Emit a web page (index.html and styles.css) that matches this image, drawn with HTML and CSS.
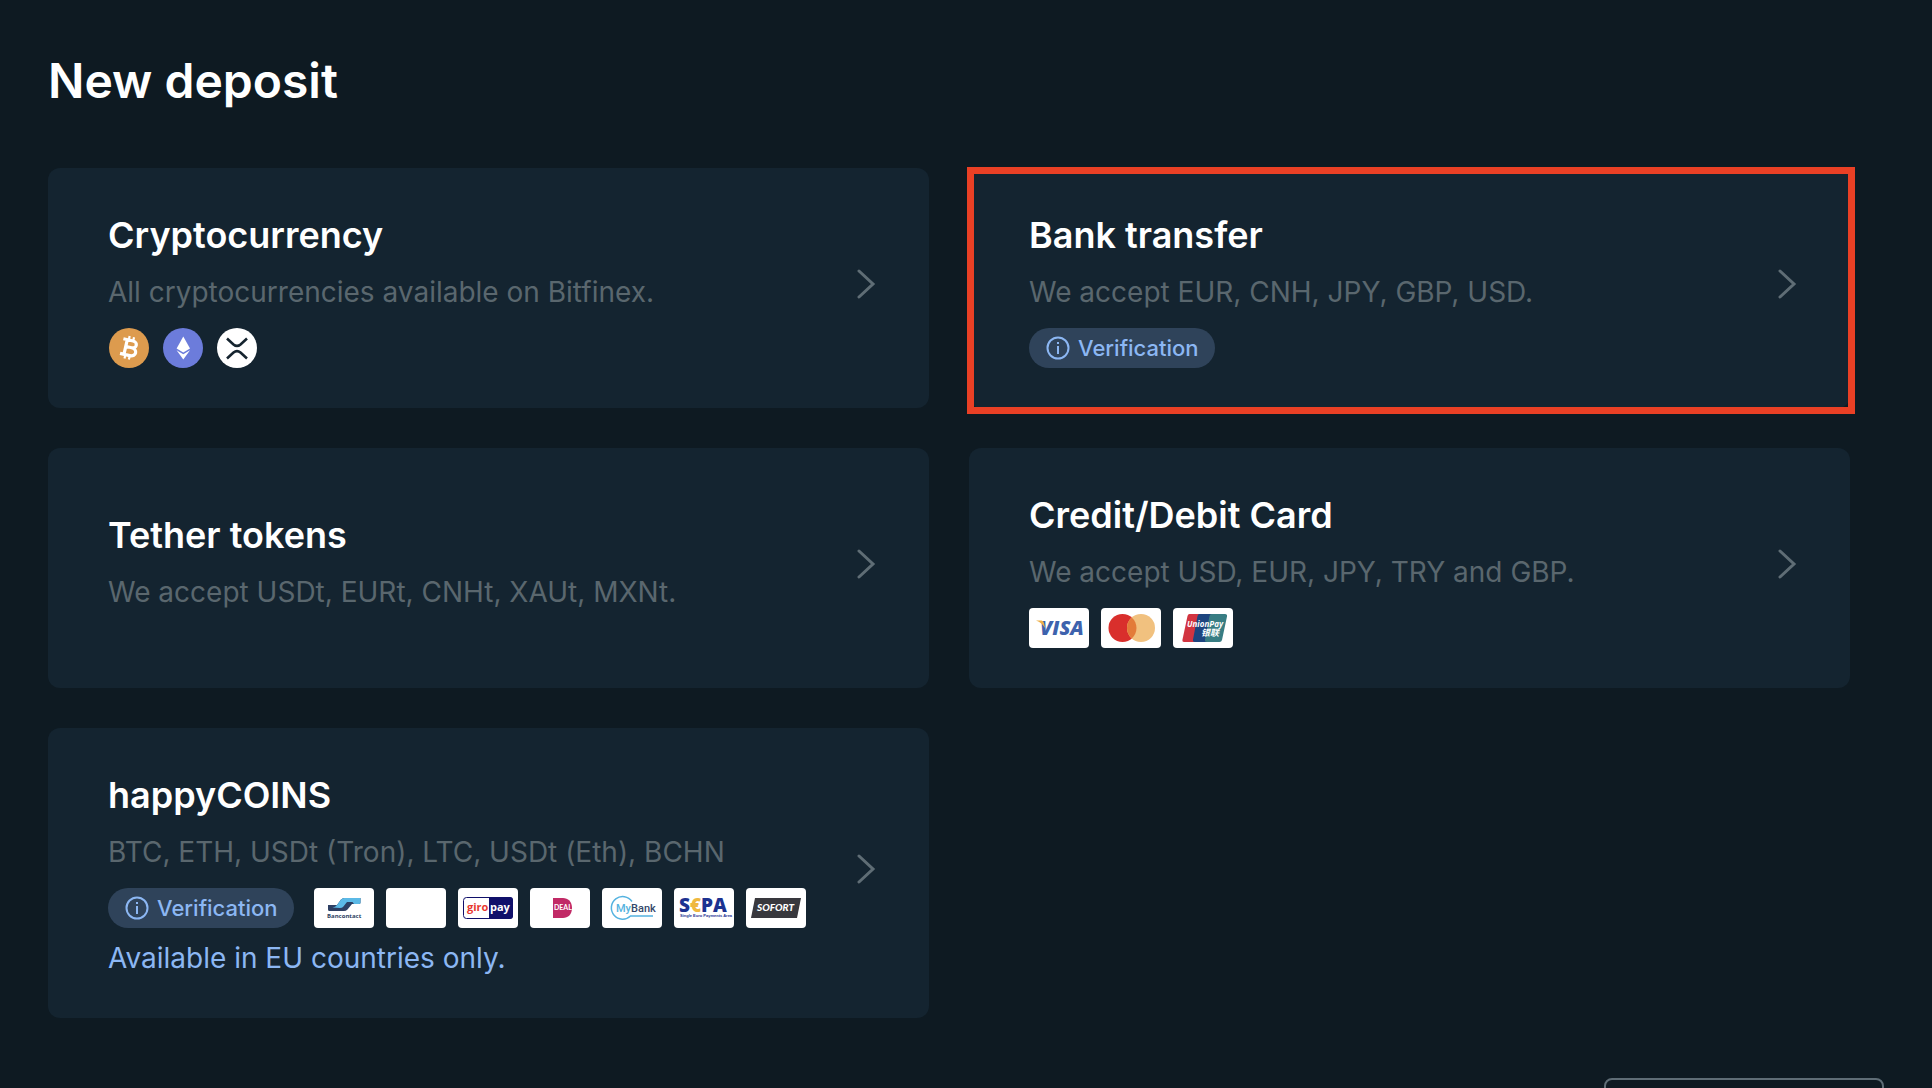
FILE: index.html
```html
<!DOCTYPE html>
<html lang="en">
<head>
	<meta charset="UTF-8">
	<meta name="viewport" content="width=device-width, initial-scale=1">
	<title>New deposit</title>
	<link rel="stylesheet" href="styles.css">
</head>
<body>
	<!-- shared shapes -->
	<svg class="defs" aria-hidden="true">
		<symbol id="chevron" viewBox="0 0 20 30">
			<path d="M3 2 L17 15 L3 28" fill="none" stroke="currentColor" stroke-width="3" stroke-linecap="round"/>
		</symbol>
		<symbol id="info" viewBox="0 0 24 24">
			<circle cx="12" cy="12" r="10.5" fill="none" stroke="currentColor" stroke-width="2"/>
			<rect x="11" y="10" width="2" height="8" fill="currentColor"/>
			<rect x="11" y="6" width="2" height="2" fill="currentColor"/>
		</symbol>
	</svg>

	<main class="page">
		<h1 class="page-title">New deposit</h1>

		<div class="methods">
			<a href="#crypto" class="card">
				<div class="card-body">
					<h2>Cryptocurrency</h2>
					<p>All cryptocurrencies available on Bitfinex.</p>
					<div class="icons">
						<svg class="coin" viewBox="0 0 42 40" role="img" aria-label="Bitcoin">
							<circle cx="21" cy="20" r="20" fill="#dd9b4e"/>
							<g transform="translate(22 20) rotate(13)" fill="none" stroke="#fff">
								<path d="M-4.500 -7.500V7.500M-8.500 -7.500H1.500C6.800 -7.500 6.800 -.6 1.500 -.6H-4M1.500 -.6C8.200 -.6 8.200 7.500 1.500 7.500H-8.500" stroke-width="3.200"/>
								<path d="M-3 -11.500V-7M1.500 -11.500V-7M-3 7V11.500M1.500 7V11.500" stroke-width="2.200"/>
							</g>
						</svg>
						<svg class="coin" viewBox="0 0 42 40" role="img" aria-label="Ethereum">
							<circle cx="21" cy="20" r="20" fill="#6c7cdb"/>
							<path d="M21.300 8.500L28 20.600L21.300 24.500L14.600 20.600Z" fill="#fff"/>
							<path d="M14.600 22.300L21.300 26.200L28 22.300L21.300 31.500Z" fill="#fff"/>
						</svg>
						<svg class="coin" viewBox="0 0 42 40" role="img" aria-label="XRP">
							<circle cx="21" cy="20" r="20" fill="#fff"/>
							<path d="M11 10.500L17.500 16.400Q21 19.400 24.500 16.400L31 10.500M11 30.500L17.500 24.600Q21 21.600 24.500 24.600L31 30.500" fill="none" stroke="#15242f" stroke-width="2.600"/>
						</svg>
					</div>
				</div>
				<svg class="chevron" aria-hidden="true"><use href="#chevron"/></svg>
			</a>

			<a href="#bank" class="card card-marked">
				<div class="card-body">
					<h2>Bank transfer</h2>
					<p>We accept EUR, CNH, JPY, GBP, USD.</p>
					<div class="icons">
						<span class="badge"><svg class="info" aria-hidden="true"><use href="#info"/></svg>Verification</span>
					</div>
				</div>
				<svg class="chevron" aria-hidden="true"><use href="#chevron"/></svg>
			</a>

			<a href="#tether" class="card">
				<div class="card-body">
					<h2>Tether tokens</h2>
					<p>We accept USDt, EURt, CNHt, XAUt, MXNt.</p>
				</div>
				<svg class="chevron" aria-hidden="true"><use href="#chevron"/></svg>
			</a>

			<a href="#card" class="card">
				<div class="card-body">
					<h2>Credit/Debit Card</h2>
					<p>We accept USD, EUR, JPY, TRY and GBP.</p>
					<div class="icons">
						<svg class="pay" viewBox="0 0 60 40">
							<text class="visa" x="11" y="27">VISA</text>
							<path d="M7 12.500H12.500Q14.500 12.700 15 15L16 20Q13 14.500 7 12.500Z" fill="#eeb04a"/>
						</svg>
						<svg class="pay" viewBox="0 0 60 40" role="img" aria-label="Mastercard">
							<circle cx="21.500" cy="20" r="14" fill="#d92f2c"/>
							<circle cx="40" cy="20" r="14" fill="#f1c17f"/>
							<path d="M30.750 9.500A14 14 0 0 1 30.750 30.500A14 14 0 0 1 30.750 9.500Z" fill="#e37b39"/>
						</svg>
						<svg class="pay" viewBox="0 0 60 40">
							<path d="M16.500 6H30L23 34H11Q9 34 9.500 31.500L14.500 8Q15 6 16.500 6Z" fill="#d23440"/>
							<path d="M26.500 6H42L35 34H22Q19.500 34 20 31.500L24.500 8Q25 6 26.500 6Z" fill="#1d457f"/>
							<path d="M38.500 6H52Q54.500 6 54 8.500L49 32Q48.500 34 46.500 34H34Q31.500 34 32 31.500L36.500 8Q37 6 38.500 6Z" fill="#387d83"/>
							<text class="union" x="14" y="19">UnionPay</text>
							<text class="union-cn" x="28" y="28">银联</text>
						</svg>
					</div>
				</div>
				<svg class="chevron" aria-hidden="true"><use href="#chevron"/></svg>
			</a>

			<a href="#happycoins" class="card">
				<div class="card-body">
					<h2>happyCOINS</h2>
					<p>BTC, ETH, USDt (Tron), LTC, USDt (Eth), BCHN</p>
					<div class="icons">
						<span class="badge badge-spaced"><svg class="info" aria-hidden="true"><use href="#info"/></svg>Verification</span>
						<svg class="pay" viewBox="0 0 60 40">
							<path d="M14 17H23L27 11.500Q28.500 10 30 10H46.500V14.500Q46.500 16 45 16H38L33.500 21.500Q32 23 30 23H15.500Q14 23 14 21.500Z" fill="#2d3f63"/>
							<path d="M18.500 19.500Q21.500 19 23 17L27 11.500Q28.500 10 30 10H46.500V14.500Q46.500 16 45 16H40L38.500 14H33L29 19Q28 20 26 20Z" fill="#5bb9e6"/>
							<text class="bancontact" x="13" y="30">Bancontact</text>
						</svg>
						<svg class="pay" viewBox="0 0 60 40" aria-hidden="true"></svg>
						<svg class="pay" viewBox="0 0 60 40">
							<rect x="5.500" y="9.500" width="49" height="21" rx="3" fill="#fff" stroke="#10106a"/>
							<path d="M31 9H52Q55 9 55 12V28Q55 31 52 31H31Z" fill="#10106a"/>
							<text class="giro giro-red" x="9" y="23">giro</text>
							<text class="giro giro-white" x="32" y="23">pay</text>
						</svg>
						<svg class="pay" viewBox="0 0 60 40">
							<path d="M23 10H33C38 10 42 13.500 42 20S38 30 33 30H23Z" fill="#c12a66"/>
							<text class="ideal" x="24" y="22">DEAL</text>
						</svg>
						<svg class="pay" viewBox="0 0 60 40">
							<path d="M30 13.500A11.300 11.300 0 1 0 28.500 28H51" fill="none" stroke="#55b3e0" stroke-width="1.500"/>
							<text class="mybank" x="14" y="24"><tspan class="mybank-my">My</tspan>Bank</text>
						</svg>
						<svg class="pay" viewBox="0 0 60 40">
							<text class="sepa" x="5" y="24">S<tspan class="sepa-euro">€</tspan>PA</text>
							<text class="sepa-note" x="6" y="29">Single Euro Payments Area</text>
						</svg>
						<svg class="pay" viewBox="0 0 60 40">
							<path d="M9 10H55L51 30H5Z" fill="#38383d"/>
							<text class="sofort" x="11" y="23">SOFORT</text>
						</svg>
					</div>
					<p class="note">Available in EU countries only.</p>
				</div>
				<svg class="chevron" aria-hidden="true"><use href="#chevron"/></svg>
			</a>
		</div>

		<div class="footer">
			<button type="button" class="back" aria-label="Back"></button>
		</div>
	</main>
</body>
</html>
```
FILE: styles.css
```css
* {
	box-sizing: border-box;
	margin: 0;
	padding: 0;
}

body {
	height: 100vh;
	overflow: hidden;
	background-color: #0e1a22;
	color: #fff;
	font-family: Inter, "Liberation Sans", sans-serif;
}

.defs {
	display: none;
}

.page {
	padding: 45px 48px;
}

.page-title {
	margin-bottom: 51px;
	font-size: 48px;
	font-weight: 600;
	line-height: 72px;
}

/* deposit methods */
.methods {
	display: grid;
	grid-template-columns: 1fr 1fr;
	gap: 40px;
	padding-right: 34px;
}

.card {
	position: relative;
	display: flex;
	align-items: center;
	justify-content: space-between;
	min-height: 240px;
	padding: 40px 53px 40px 60px;
	border-radius: 12px;
	background-color: #142430;
	color: inherit;
	text-decoration: none;
}

.card:hover {
	background-color: #1a2c3a;
}

.card-marked::after {
	content: "";
	position: absolute;
	inset: -1px -5px -6px -2px;
	border: 7px solid #ea4025;
}

.card h2 {
	font-size: 36px;
	font-weight: 600;
	line-height: 54px;
}

.card p {
	margin: 9px 0 15px;
	color: #5a676e;
	font-size: 28px;
	line-height: 42px;
}

.card .note {
	margin: 9px 0 -1px;
	color: #8cb7f3;
}

.chevron {
	flex: none;
	width: 20px;
	height: 30px;
	margin-bottom: 8px;
	color: #5f6d75;
}

.icons {
	display: flex;
	align-items: center;
	gap: 12px;
}

.coin {
	width: 42px;
	height: 40px;
}

.pay {
	width: 60px;
	height: 40px;
	border-radius: 4px;
	background-color: #fff;
}

.badge {
	display: flex;
	align-items: center;
	gap: 8px;
	height: 40px;
	padding: 0 16px 0 17px;
	border-radius: 20px;
	background-color: #2f435a;
	color: #8cb7f3;
	font-size: 22px;
	font-weight: 550;
	line-height: 40px;
}

.badge-spaced {
	margin-right: 8px;
}

.info {
	width: 24px;
	height: 24px;
}

/* lettering inside the payment logos */
.visa {
	fill: #3d62ad;
	font: italic 800 20px "Open Sans", sans-serif;
}

.union {
	fill: #fff;
	font: italic 700 8px "Open Sans", sans-serif;
}

.union-cn {
	fill: #fff;
	font: italic 700 9px "Noto Sans CJK SC", sans-serif;
}

.bancontact {
	fill: #2d3f63;
	font: 700 6px "Open Sans", sans-serif;
}

.giro {
	font: 700 11px "Open Sans", sans-serif;
}

.giro-red {
	fill: #e8382f;
}

.giro-white {
	fill: #fff;
}

.ideal {
	fill: #fff;
	font: 700 7px Lato, sans-serif;
}

.mybank {
	fill: #34476a;
	font: 500 11px Roboto, sans-serif;
}

.mybank-my {
	fill: #55b3e0;
}

.sepa {
	fill: #1c3290;
	font: 800 19px "Open Sans", sans-serif;
}

.sepa-euro {
	fill: #efb83f;
}

.sepa-note {
	fill: #1c3290;
	font: 700 4px "Liberation Sans", sans-serif;
}

.sofort {
	fill: #fff;
	font: italic 900 10px Lato, sans-serif;
}

/* footer */
.footer {
	display: flex;
	justify-content: flex-end;
	margin-top: 60px;
}

.back {
	width: 280px;
	height: 80px;
	border: 2px solid #5f6d76;
	border-radius: 8px;
	background: none;
	cursor: pointer;
}
```
